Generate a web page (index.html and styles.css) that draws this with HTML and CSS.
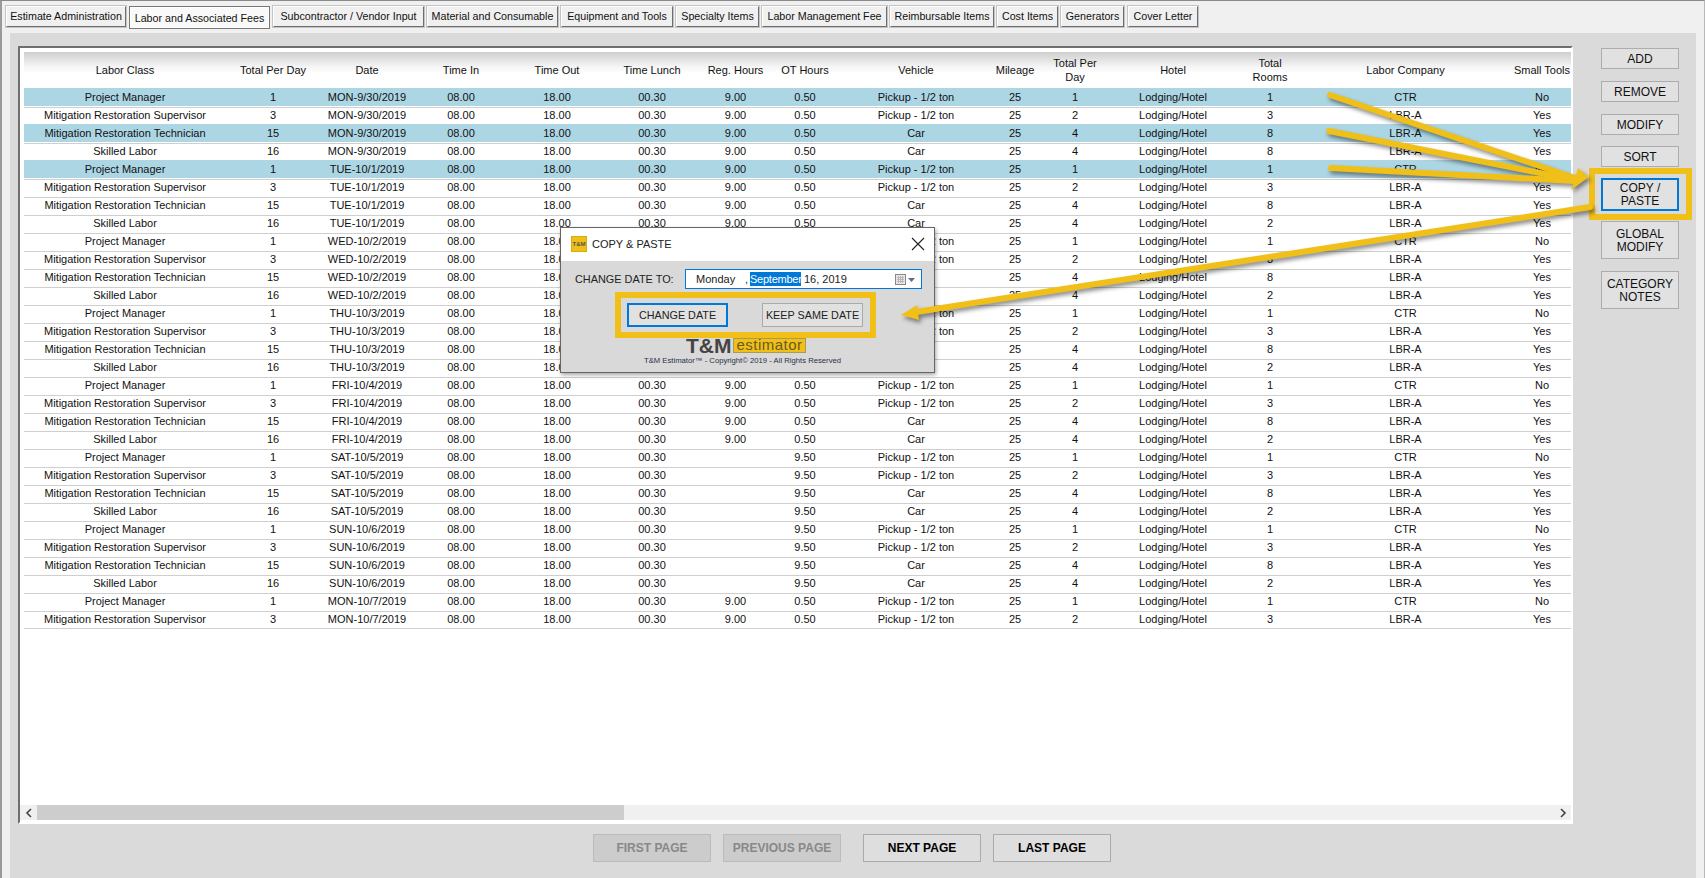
FILE: index.html
```html
<!DOCTYPE html>
<html lang="en">
<head>
<meta charset="utf-8">
<title>T&amp;M Estimator</title>
<link rel="stylesheet" href="styles.css">
</head>
<body>
<div class="app">
  <nav class="tabs">
    <button class="tab t1">Estimate Administration</button>
    <button class="tab t2 active">Labor and Associated Fees</button>
    <button class="tab t3">Subcontractor / Vendor Input</button>
    <button class="tab t4">Material and Consumable</button>
    <button class="tab t5">Equipment and Tools</button>
    <button class="tab t6">Specialty Items</button>
    <button class="tab t7">Labor Management Fee</button>
    <button class="tab t8">Reimbursable Items</button>
    <button class="tab t9">Cost Items</button>
    <button class="tab t10">Generators</button>
    <button class="tab t11">Cover Letter</button>
  </nav>
  <main class="panel">
    <section class="content">
      <div class="grid">
        <div class="grid-view">
          <table class="table">
            <colgroup>
              <col class="c1"><col class="c2"><col class="c3"><col class="c4"><col class="c5"><col class="c6"><col class="c7"><col class="c8"><col class="c9"><col class="c10"><col class="c11"><col class="c12"><col class="c13"><col class="c14"><col class="c15">
            </colgroup>
            <thead>
              <tr><th>Labor Class</th><th>Total Per Day</th><th>Date</th><th>Time In</th><th>Time Out</th><th>Time Lunch</th><th>Reg. Hours</th><th>OT Hours</th><th>Vehicle</th><th>Mileage</th><th>Total Per<br>Day</th><th>Hotel</th><th>Total<br>Rooms</th><th>Labor Company</th><th>Small Tools</th></tr>
            </thead>
            <tbody>
              <tr class="sel"><td>Project Manager</td><td>1</td><td>MON-9/30/2019</td><td>08.00</td><td>18.00</td><td>00.30</td><td>9.00</td><td>0.50</td><td>Pickup - 1/2 ton</td><td>25</td><td>1</td><td>Lodging/Hotel</td><td>1</td><td>CTR</td><td>No</td></tr>
              <tr><td>Mitigation Restoration Supervisor</td><td>3</td><td>MON-9/30/2019</td><td>08.00</td><td>18.00</td><td>00.30</td><td>9.00</td><td>0.50</td><td>Pickup - 1/2 ton</td><td>25</td><td>2</td><td>Lodging/Hotel</td><td>3</td><td>LBR-A</td><td>Yes</td></tr>
              <tr class="sel"><td>Mitigation Restoration Technician</td><td>15</td><td>MON-9/30/2019</td><td>08.00</td><td>18.00</td><td>00.30</td><td>9.00</td><td>0.50</td><td>Car</td><td>25</td><td>4</td><td>Lodging/Hotel</td><td>8</td><td>LBR-A</td><td>Yes</td></tr>
              <tr><td>Skilled Labor</td><td>16</td><td>MON-9/30/2019</td><td>08.00</td><td>18.00</td><td>00.30</td><td>9.00</td><td>0.50</td><td>Car</td><td>25</td><td>4</td><td>Lodging/Hotel</td><td>8</td><td>LBR-A</td><td>Yes</td></tr>
              <tr class="sel"><td>Project Manager</td><td>1</td><td>TUE-10/1/2019</td><td>08.00</td><td>18.00</td><td>00.30</td><td>9.00</td><td>0.50</td><td>Pickup - 1/2 ton</td><td>25</td><td>1</td><td>Lodging/Hotel</td><td>1</td><td>CTR</td><td>No</td></tr>
              <tr><td>Mitigation Restoration Supervisor</td><td>3</td><td>TUE-10/1/2019</td><td>08.00</td><td>18.00</td><td>00.30</td><td>9.00</td><td>0.50</td><td>Pickup - 1/2 ton</td><td>25</td><td>2</td><td>Lodging/Hotel</td><td>3</td><td>LBR-A</td><td>Yes</td></tr>
              <tr><td>Mitigation Restoration Technician</td><td>15</td><td>TUE-10/1/2019</td><td>08.00</td><td>18.00</td><td>00.30</td><td>9.00</td><td>0.50</td><td>Car</td><td>25</td><td>4</td><td>Lodging/Hotel</td><td>8</td><td>LBR-A</td><td>Yes</td></tr>
              <tr><td>Skilled Labor</td><td>16</td><td>TUE-10/1/2019</td><td>08.00</td><td>18.00</td><td>00.30</td><td>9.00</td><td>0.50</td><td>Car</td><td>25</td><td>4</td><td>Lodging/Hotel</td><td>2</td><td>LBR-A</td><td>Yes</td></tr>
              <tr><td>Project Manager</td><td>1</td><td>WED-10/2/2019</td><td>08.00</td><td>18.00</td><td>00.30</td><td>9.00</td><td>0.50</td><td>Pickup - 1/2 ton</td><td>25</td><td>1</td><td>Lodging/Hotel</td><td>1</td><td>CTR</td><td>No</td></tr>
              <tr><td>Mitigation Restoration Supervisor</td><td>3</td><td>WED-10/2/2019</td><td>08.00</td><td>18.00</td><td>00.30</td><td>9.00</td><td>0.50</td><td>Pickup - 1/2 ton</td><td>25</td><td>2</td><td>Lodging/Hotel</td><td>3</td><td>LBR-A</td><td>Yes</td></tr>
              <tr><td>Mitigation Restoration Technician</td><td>15</td><td>WED-10/2/2019</td><td>08.00</td><td>18.00</td><td>00.30</td><td>9.00</td><td>0.50</td><td>Car</td><td>25</td><td>4</td><td>Lodging/Hotel</td><td>8</td><td>LBR-A</td><td>Yes</td></tr>
              <tr><td>Skilled Labor</td><td>16</td><td>WED-10/2/2019</td><td>08.00</td><td>18.00</td><td>00.30</td><td>9.00</td><td>0.50</td><td>Car</td><td>25</td><td>4</td><td>Lodging/Hotel</td><td>2</td><td>LBR-A</td><td>Yes</td></tr>
              <tr><td>Project Manager</td><td>1</td><td>THU-10/3/2019</td><td>08.00</td><td>18.00</td><td>00.30</td><td>9.00</td><td>0.50</td><td>Pickup - 1/2 ton</td><td>25</td><td>1</td><td>Lodging/Hotel</td><td>1</td><td>CTR</td><td>No</td></tr>
              <tr><td>Mitigation Restoration Supervisor</td><td>3</td><td>THU-10/3/2019</td><td>08.00</td><td>18.00</td><td>00.30</td><td>9.00</td><td>0.50</td><td>Pickup - 1/2 ton</td><td>25</td><td>2</td><td>Lodging/Hotel</td><td>3</td><td>LBR-A</td><td>Yes</td></tr>
              <tr><td>Mitigation Restoration Technician</td><td>15</td><td>THU-10/3/2019</td><td>08.00</td><td>18.00</td><td>00.30</td><td>9.00</td><td>0.50</td><td>Car</td><td>25</td><td>4</td><td>Lodging/Hotel</td><td>8</td><td>LBR-A</td><td>Yes</td></tr>
              <tr><td>Skilled Labor</td><td>16</td><td>THU-10/3/2019</td><td>08.00</td><td>18.00</td><td>00.30</td><td>9.00</td><td>0.50</td><td>Car</td><td>25</td><td>4</td><td>Lodging/Hotel</td><td>2</td><td>LBR-A</td><td>Yes</td></tr>
              <tr><td>Project Manager</td><td>1</td><td>FRI-10/4/2019</td><td>08.00</td><td>18.00</td><td>00.30</td><td>9.00</td><td>0.50</td><td>Pickup - 1/2 ton</td><td>25</td><td>1</td><td>Lodging/Hotel</td><td>1</td><td>CTR</td><td>No</td></tr>
              <tr><td>Mitigation Restoration Supervisor</td><td>3</td><td>FRI-10/4/2019</td><td>08.00</td><td>18.00</td><td>00.30</td><td>9.00</td><td>0.50</td><td>Pickup - 1/2 ton</td><td>25</td><td>2</td><td>Lodging/Hotel</td><td>3</td><td>LBR-A</td><td>Yes</td></tr>
              <tr><td>Mitigation Restoration Technician</td><td>15</td><td>FRI-10/4/2019</td><td>08.00</td><td>18.00</td><td>00.30</td><td>9.00</td><td>0.50</td><td>Car</td><td>25</td><td>4</td><td>Lodging/Hotel</td><td>8</td><td>LBR-A</td><td>Yes</td></tr>
              <tr><td>Skilled Labor</td><td>16</td><td>FRI-10/4/2019</td><td>08.00</td><td>18.00</td><td>00.30</td><td>9.00</td><td>0.50</td><td>Car</td><td>25</td><td>4</td><td>Lodging/Hotel</td><td>2</td><td>LBR-A</td><td>Yes</td></tr>
              <tr><td>Project Manager</td><td>1</td><td>SAT-10/5/2019</td><td>08.00</td><td>18.00</td><td>00.30</td><td></td><td>9.50</td><td>Pickup - 1/2 ton</td><td>25</td><td>1</td><td>Lodging/Hotel</td><td>1</td><td>CTR</td><td>No</td></tr>
              <tr><td>Mitigation Restoration Supervisor</td><td>3</td><td>SAT-10/5/2019</td><td>08.00</td><td>18.00</td><td>00.30</td><td></td><td>9.50</td><td>Pickup - 1/2 ton</td><td>25</td><td>2</td><td>Lodging/Hotel</td><td>3</td><td>LBR-A</td><td>Yes</td></tr>
              <tr><td>Mitigation Restoration Technician</td><td>15</td><td>SAT-10/5/2019</td><td>08.00</td><td>18.00</td><td>00.30</td><td></td><td>9.50</td><td>Car</td><td>25</td><td>4</td><td>Lodging/Hotel</td><td>8</td><td>LBR-A</td><td>Yes</td></tr>
              <tr><td>Skilled Labor</td><td>16</td><td>SAT-10/5/2019</td><td>08.00</td><td>18.00</td><td>00.30</td><td></td><td>9.50</td><td>Car</td><td>25</td><td>4</td><td>Lodging/Hotel</td><td>2</td><td>LBR-A</td><td>Yes</td></tr>
              <tr><td>Project Manager</td><td>1</td><td>SUN-10/6/2019</td><td>08.00</td><td>18.00</td><td>00.30</td><td></td><td>9.50</td><td>Pickup - 1/2 ton</td><td>25</td><td>1</td><td>Lodging/Hotel</td><td>1</td><td>CTR</td><td>No</td></tr>
              <tr><td>Mitigation Restoration Supervisor</td><td>3</td><td>SUN-10/6/2019</td><td>08.00</td><td>18.00</td><td>00.30</td><td></td><td>9.50</td><td>Pickup - 1/2 ton</td><td>25</td><td>2</td><td>Lodging/Hotel</td><td>3</td><td>LBR-A</td><td>Yes</td></tr>
              <tr><td>Mitigation Restoration Technician</td><td>15</td><td>SUN-10/6/2019</td><td>08.00</td><td>18.00</td><td>00.30</td><td></td><td>9.50</td><td>Car</td><td>25</td><td>4</td><td>Lodging/Hotel</td><td>8</td><td>LBR-A</td><td>Yes</td></tr>
              <tr><td>Skilled Labor</td><td>16</td><td>SUN-10/6/2019</td><td>08.00</td><td>18.00</td><td>00.30</td><td></td><td>9.50</td><td>Car</td><td>25</td><td>4</td><td>Lodging/Hotel</td><td>2</td><td>LBR-A</td><td>Yes</td></tr>
              <tr><td>Project Manager</td><td>1</td><td>MON-10/7/2019</td><td>08.00</td><td>18.00</td><td>00.30</td><td>9.00</td><td>0.50</td><td>Pickup - 1/2 ton</td><td>25</td><td>1</td><td>Lodging/Hotel</td><td>1</td><td>CTR</td><td>No</td></tr>
              <tr><td>Mitigation Restoration Supervisor</td><td>3</td><td>MON-10/7/2019</td><td>08.00</td><td>18.00</td><td>00.30</td><td>9.00</td><td>0.50</td><td>Pickup - 1/2 ton</td><td>25</td><td>2</td><td>Lodging/Hotel</td><td>3</td><td>LBR-A</td><td>Yes</td></tr>
            </tbody>
          </table>
        </div>
        <div class="scrollbar">
          <span class="scroll-arrow"><svg width="8" height="10" viewBox="0 0 8 10"><path class="chev" d="M6 1 2 5l4 4"/></svg></span>
          <span class="scroll-thumb"></span>
          <span class="scroll-track"></span>
          <span class="scroll-arrow"><svg width="8" height="10" viewBox="0 0 8 10"><path class="chev" d="M2 1l4 4-4 4"/></svg></span>
        </div>
      </div>
      <div class="pager">
        <button class="page-btn" disabled>FIRST PAGE</button>
        <button class="page-btn" disabled>PREVIOUS PAGE</button>
        <button class="page-btn next">NEXT PAGE</button>
        <button class="page-btn">LAST PAGE</button>
      </div>
    </section>
    <aside class="side">
      <button class="side-btn">ADD</button>
      <button class="side-btn">REMOVE</button>
      <button class="side-btn">MODIFY</button>
      <button class="side-btn gap-s">SORT</button>
      <div class="copy-wrap">
        <button class="side-btn copy">COPY /<br>PASTE</button>
        <span class="callout copy-callout"></span>
      </div>
      <button class="side-btn tall gap-xs">GLOBAL<br>MODIFY</button>
      <button class="side-btn tall">CATEGORY<br>NOTES</button>
    </aside>
  </main>

  <div class="dialog">
    <header class="dialog-title">
      <span class="dialog-icon">T&amp;M</span>
      <span class="dialog-name">COPY &amp; PASTE</span>
      <svg class="dialog-close" width="14" height="14" viewBox="0 0 14 14"><path d="M1 1l12 12M13 1 1 13"/></svg>
    </header>
    <div class="dialog-body">
      <div class="date-row">
        <label class="date-label">CHANGE DATE TO:</label>
        <div class="date-field">
          <span class="date-day">Monday</span>
          <span class="date-comma">,</span>
          <span class="date-sel">September</span>
          <span class="date-rest">16, 2019</span>
          <svg class="cal" width="22" height="13" viewBox="0 0 22 13">
            <rect class="cal-box" x="0.5" y="1.5" width="10" height="10"/>
            <path class="cal-grid" d="M2 4.5h7M2 6.5h7M2 8.5h7M3.5 3v7M5.5 3v7M7.5 3v7"/>
            <path class="cal-arrow" d="M13 5h7l-3.500 4z"/>
          </svg>
        </div>
      </div>
      <div class="dialog-actions">
        <span class="callout actions-callout"></span>
        <button class="dlg-btn primary">CHANGE DATE</button>
        <button class="dlg-btn">KEEP SAME DATE</button>
      </div>
      <div class="logo"><span class="logo-tm">T&amp;M</span><span class="logo-est">estimator</span></div>
      <p class="copyright">T&amp;M Estimator™ - Copyright© 2019 - All Rights Reserved</p>
    </div>
  </div>

  <svg class="arrows" width="1705" height="878" viewBox="0 0 1705 878">
    <g class="arrow-group">
      <path class="arrow-line" d="M1330 95 1575 178"/>
      <path class="arrow-line" d="M1329 131 1575 180"/>
      <path class="arrow-line" d="M1331 168 1575 181"/>
      <path class="arrow-fill" d="M1578 168 1589 177 1571 190 1574 182z"/>
      <path class="arrow-line" d="M916 312 1590 207"/>
      <path class="arrow-fill" d="M901 315 917 305 919 320z"/>
    </g>
  </svg>
</div>
</body>
</html>
```

FILE: styles.css
```css
* { box-sizing: border-box; }
html, body { margin: 0; padding: 0; }
body { width: 1705px; height: 878px; overflow: hidden; font-family: "Liberation Sans", Arial, sans-serif; color: #111; }
button { font-family: inherit; cursor: default; padding: 0; }

.app { position: relative; width: 1705px; height: 878px; background: #f0f0f0; border-top: 1px solid #8a8a8a; border-left: 2px solid #9a9a9a; border-right: 1px solid #b8b8b8; display: flex; flex-direction: column; }

.tabs { display: flex; gap: 3px; padding: 5px 0 0 4px; height: 32px; flex: none; }
.tab { height: 21px; padding-bottom: 1px; font-size: 10.7px; color: #111; background: #f0f0f0; border: 1px solid; border-color: #fff #6e6e6e #6e6e6e #fff; box-shadow: 0 0 0 1px #c4c4c4; white-space: nowrap; }
.tab.active { height: 23px; background: #f9f9f9; border-color: #777; box-shadow: inset 0 0 0 1px #fff; padding-top: 2px; }
.t1 { width: 120px; } .t2 { width: 141px; } .t3 { width: 151px; } .t4 { width: 131px; }
.t5 { width: 112px; } .t6 { width: 83px; } .t7 { width: 125px; } .t8 { width: 104px; }
.t9 { width: 61px; } .t10 { width: 63px; margin-right: 1px; } .t11 { width: 70px; }

.panel { flex: 1; margin: 0 8px 0 8px; background: #dadada; display: flex; align-items: flex-start; padding: 13px 0 0 8px; }
.content { width: 1555px; flex: none; }
.grid { height: 778px; border-top: 2px solid #6f6f6f; border-left: 2px solid #6f6f6f; border-right: 2px solid #fff; border-bottom: 2px solid #fff; background: #fff; display: flex; flex-direction: column; }
.grid-view { flex: 1; padding: 4px 0 0 4px; overflow: hidden; }
.table { table-layout: fixed; width: 1558px; border-collapse: collapse; font-size: 11px; }
.c1 { width: 202px; } .c2, .c3, .c4 { width: 94px; } .c5 { width: 98px; } .c6 { width: 92px; }
.c7 { width: 75px; } .c8 { width: 64px; } .c9 { width: 158px; } .c10 { width: 40px; }
.c11 { width: 80px; } .c12 { width: 116px; } .c13 { width: 78px; } .c14 { width: 193px; } .c15 { width: 80px; }
thead tr { background: linear-gradient(#cfcfcf, #f4f4f4 40%, #fff 60%); }
th { height: 36px; padding: 0; font-weight: normal; line-height: 14px; white-space: nowrap; }
td { height: 18px; padding: 0; text-align: center; white-space: nowrap; line-height: 18px; }
tbody tr { background: linear-gradient(#fff 1px, #cfcfcf 1px, #cfcfcf 2px, #fff 2px); }
tbody tr:first-child { background: #fff; }
tbody tr:last-child { box-shadow: 0 1px 0 0 #cfcfcf; }
tbody tr.sel { background: #add6e5; }

.scrollbar { flex: none; height: 15px; margin-bottom: 2px; display: flex; background: #f0f0f0; }
.scroll-arrow { width: 17px; flex: none; display: flex; align-items: center; justify-content: center; }
.scroll-thumb { width: 587px; flex: none; background: #cdcdcd; }
.scroll-track { flex: 1; }
.chev { fill: none; stroke: #444; stroke-width: 1.6; }

.pager { display: flex; gap: 12px; padding-left: 575px; margin-top: 10px; }
.page-btn { width: 118px; height: 28px; font-size: 12px; font-weight: bold; color: #000; background: #dedede; border: 1px solid #aaa; }
.page-btn:disabled { background: #cccccc; color: #888; border-color: #bbb; }
.page-btn.next { margin-left: 10px; }

.side { width: 78px; flex: none; margin-left: 28px; padding-top: 2px; display: flex; flex-direction: column; gap: 12px; }
.side-btn { width: 78px; height: 21px; padding-top: 1px; font-size: 12px; color: #111; background: #e1e1e1; border: 1px solid #adadad; line-height: 13px; flex: none; }
.gap-s { margin-top: -1px; }
.side-btn.tall { height: 38px; }
.gap-xs { margin-top: -2px; }
.copy-wrap { position: relative; margin-top: -1px; height: 33px; }
.side-btn.copy { height: 33px; padding-top: 0; border: 2px solid #0078d7; }
.callout { position: absolute; border: 6px solid #f0c018; pointer-events: none; }
.copy-callout { left: -12px; top: -10px; width: 103px; height: 52px; }

.dialog { position: absolute; left: 558px; top: 226px; width: 375px; height: 146px; background: #d9d9d9; border: 1px solid #666; box-shadow: 1px 2px 4px rgba(0,0,0,.35); display: flex; flex-direction: column; }
.dialog-title { height: 33px; flex: none; background: #fff; display: flex; align-items: center; padding: 0 8px 1px 10px; }
.dialog-icon { width: 16px; height: 16px; background: #f0c018; border: 1px solid #d8ac10; font-size: 6px; font-weight: bold; color: #555; text-align: center; line-height: 14px; }
.dialog-name { margin-left: 5px; font-size: 11px; color: #222; flex: 1; }
.dialog-close { fill: none; stroke: #222; stroke-width: 1.1; margin-right: 1px; }
.dialog-body { flex: 1; display: flex; flex-direction: column; position: relative; }
.date-row { display: flex; align-items: center; padding: 8px 12px 0 14px; }
.date-label { width: 110px; font-size: 10.900px; color: #222; white-space: nowrap; }
.date-field { flex: 1; height: 20px; background: #fff; border: 1px solid #0078d7; display: flex; align-items: center; font-size: 11px; color: #222; padding-left: 10px; white-space: nowrap; }
.date-day { width: 49px; }
.date-comma { width: 5px; }
.date-sel { width: 51px; background: #0078d7; color: #fff; height: 14px; line-height: 14px; margin-right: 3px; letter-spacing: -0.25px; }
.date-rest { flex: 1; }
.cal { margin-right: 4px; }
.cal-box { fill: #e8e8e8; stroke: #888; }
.cal-grid { stroke: #aaa; fill: none; stroke-width: 0.7; }
.cal-arrow { fill: #5a6f8c; }

.dialog-actions { position: relative; display: flex; gap: 34px; padding: 14px 0 0 66px; }
.actions-callout { left: 54px; top: 3px; width: 261px; height: 46px; }
.dlg-btn { width: 101px; height: 24px; font-size: 10.800px; color: #222; background: #e1e1e1; border: 1px solid #aaa; white-space: nowrap; }
.dlg-btn.primary { border: 2px solid #0078d7; }

.logo { display: flex; align-items: stretch; height: 15px; margin: 11px 0 0 125px; }
.logo-tm { font-weight: bold; font-size: 21px; line-height: 15px; color: #444; width: 47px; white-space: nowrap; }
.logo-est { width: 73px; background: #f0c018; border: 1px solid #a99a55; color: #6a5a20; font-size: 15px; line-height: 11px; text-align: center; letter-spacing: 0.5px; }
.copyright { margin: 3px 0 0; padding-left: 83px; font-size: 7.700px; line-height: 10px; color: #2c3048; white-space: nowrap; }

.arrows { position: absolute; left: -2px; top: -1px; pointer-events: none; }
.arrow-group { filter: drop-shadow(2px 3px 2px rgba(0,0,0,.45)); }
.arrow-line { fill: none; stroke: #f0c018; stroke-width: 6; stroke-linecap: round; }
.arrow-fill { fill: #f0c018; }
```
